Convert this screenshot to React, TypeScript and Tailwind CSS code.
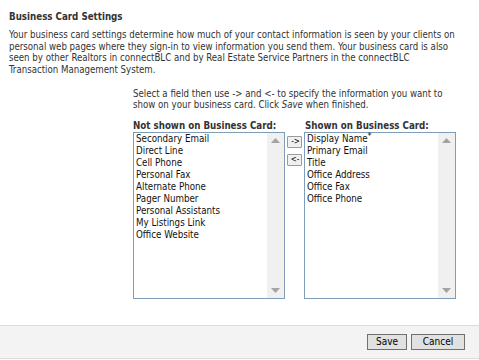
import React from "react";

const font = "font-['DejaVu_Sans_Condensed','Liberation_Sans',sans-serif]";

function Scrollbar() {
  return (
    <div className="w-[17px] bg-[#f0f0f0] flex flex-col items-center justify-between py-[5px]">
      <svg width="9" height="5" viewBox="0 0 9 5">
        <path d="M0 5 L4.5 0 L9 5 Z" fill="#a3a3a3" />
      </svg>
      <svg width="9" height="5" viewBox="0 0 9 5">
        <path d="M0 0 L9 0 L4.5 5 Z" fill="#a3a3a3" />
      </svg>
    </div>
  );
}

function ListBox({ items }: { items: React.ReactNode[] }) {
  return (
    <div className="w-[152px] h-[167px] border border-[#7f9db9] bg-white flex">
      <div className="flex-1 pl-[2px] text-[9.7px] leading-[12px] text-[#111]">
        {items.map((it, i) => (
          <div key={i} className="whitespace-nowrap">
            {it}
          </div>
        ))}
      </div>
      <Scrollbar />
    </div>
  );
}

export default function App() {
  const left = [
    "Secondary Email",
    "Direct Line",
    "Cell Phone",
    "Personal Fax",
    "Alternate Phone",
    "Pager Number",
    "Personal Assistants",
    "My Listings Link",
    "Office Website",
  ];
  const right: React.ReactNode[] = [
    <span>
      Display Name<span className="text-[9px] relative -top-[3px]">*</span>
    </span>,
    "Primary Email",
    "Title",
    "Office Address",
    "Office Fax",
    "Office Phone",
  ];
  return (
    <div className={`w-[479px] h-[360px] bg-white flex flex-col ${font} text-[#333]`}>
      <div className="flex-1 pl-[9px] pt-[11px]">
        <div className="text-[9.7px] leading-[12px] font-bold text-[#333]">Business Card Settings</div>
        <p className="mt-[6px] text-[9.6px] leading-[11.67px] whitespace-nowrap">
          Your business card settings determine how much of your contact information is seen by your clients on
          <br />
          personal web pages where they sign-in to view information you send them. Your business card is also
          <br />
          seen by other Realtors in connectBLC and by Real Estate Service Partners in the connectBLC
          <br />
          Transaction Management System.
        </p>
        <div className="ml-[124px] mt-[12px]">
          <p className="text-[9.6px] leading-[11px] whitespace-nowrap">
            Select a field then use -&gt; and &lt;- to specify the information you want to
            <br />
            show on your business card. Click <i>Save</i> when finished.
          </p>
          <div className="flex mt-[10px]">
            <div>
              <div className="text-[9.7px] leading-[12px] font-bold">Not shown on Business Card:</div>
              <ListBox items={left} />
            </div>
            <div className="ml-[2px] mr-[2px] pt-[16px] flex flex-col gap-[6px]">
              <div className="w-[15px] h-[12px] border border-[#9a9a9a] bg-[#f0f0f0] rounded-[1px] overflow-hidden flex items-center justify-center text-[8px] leading-none text-black">
                <span className="whitespace-nowrap pl-[2px]">-&gt;</span>
              </div>
              <div className="w-[15px] h-[12px] border border-[#9a9a9a] bg-[#f0f0f0] rounded-[1px] overflow-hidden flex items-center justify-center text-[8px] leading-none text-black">
                <span className="whitespace-nowrap pl-[1px]">&lt;-</span>
              </div>
            </div>
            <div>
              <div className="text-[9.7px] leading-[12px] font-bold pl-[1px]">Shown on Business Card:</div>
              <ListBox items={right} />
            </div>
          </div>
        </div>
      </div>
      <div className="h-[34px] mb-[1px] bg-[#f3f3f3] border-t border-b border-[#dcdcdc] flex items-center justify-end gap-[4px] pr-[14px]">
        <button className="w-[40px] h-[16px] border border-[#707070] bg-[#e1e1e1] text-[10px] leading-none text-black">
          Save
        </button>
        <button className="w-[54px] h-[16px] border border-[#707070] bg-[#e1e1e1] text-[10px] leading-none text-black">
          Cancel
        </button>
      </div>
    </div>
  );
}
